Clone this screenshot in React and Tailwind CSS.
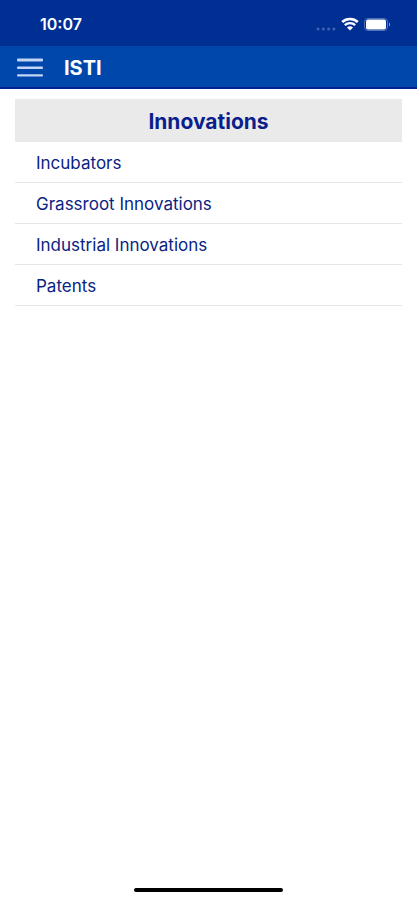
const items = ["Incubators", "Grassroot Innovations", "Industrial Innovations", "Patents"];

function StatusBar() {
  return (
    <div className="flex h-[46px] items-center justify-between bg-[#002f94] pl-10 pr-[26px] pt-[2px] text-white">
      <span className="text-base font-semibold">10:07</span>
      <div className="flex items-center">
        {/* No signal */}
        <svg width="20" height="4" viewBox="0 0 20 4" className="mr-[5px] mt-[9px] fill-[#3f62b4]" aria-hidden="true">
          <circle cx="2" cy="2" r="1.5" />
          <circle cx="7.3" cy="2" r="1.5" />
          <circle cx="12.6" cy="2" r="1.5" />
          <circle cx="17.9" cy="2" r="1.5" />
        </svg>
        {/* Wifi */}
        <svg width="18" height="14" viewBox="0 0 18 14" className="mr-[5px]" fill="none" stroke="currentColor" aria-hidden="true">
          <path d="M1.2 5C5.5 0.9 12.5 0.9 16.8 5" strokeWidth="2.6" />
          <path d="M3.8 8.1C6.6 5.4 11.4 5.4 14.2 8.1" strokeWidth="2.3" />
          <path d="M9 13.4L6 10.4C7.8 8.7 10.2 8.7 12 10.4Z" fill="currentColor" stroke="none" />
        </svg>
        {/* Battery */}
        <svg width="27" height="13" viewBox="0 0 27 13" aria-hidden="true">
          <rect x="0.5" y="0.5" width="23" height="12" rx="3.5" fill="none" stroke="#5270bb" />
          <rect x="2" y="1.5" width="20" height="10" rx="2" fill="#fff" />
          <path d="M25 4.5C26.4 5 26.4 8 25 8.5Z" fill="#8fa5d8" />
        </svg>
      </div>
    </div>
  );
}

function Header() {
  return (
    <header className="flex h-[43px] items-center gap-[21px] border-b-2 border-[#001f94] bg-[#0047ab] pl-[17px] pt-[2px] text-white">
      <button type="button" aria-label="Open menu" className="cursor-pointer">
        <svg width="26" height="20" viewBox="0 0 26 20" className="fill-[#c3d5f5]" aria-hidden="true">
          <rect x="0" y="0.6" width="26" height="3" rx="1" />
          <rect x="0" y="8.4" width="26" height="2.6" rx="1" />
          <rect x="0" y="16.2" width="26" height="2.4" rx="1" />
        </svg>
      </button>
      <h1 className="text-xl font-bold">ISTI</h1>
    </header>
  );
}

export default function App() {
  return (
    <div className="flex min-h-screen flex-col bg-white font-['Inter',sans-serif]">
      <StatusBar />
      <Header />
      <main className="flex-1 px-[15px] pt-[10px]">
        <h2 className="bg-[#eaeaea] pt-[9px] pb-[7px] text-center text-[21px] leading-[27px] font-bold text-[#0a1f8c]">
          Innovations
        </h2>
        <ul>
          {items.map((item) => (
            <li key={item} className="border-b border-[#e6e6e6]">
              <a href="#" className="block px-[21px] pt-[9px] pb-[7px] text-[17px] leading-6 text-[#0a2382]">
                {item}
              </a>
            </li>
          ))}
        </ul>
      </main>
      {/* Home indicator */}
      <div className="mx-auto mb-2 h-1 w-[149px] rounded-full bg-black" />
    </div>
  );
}
